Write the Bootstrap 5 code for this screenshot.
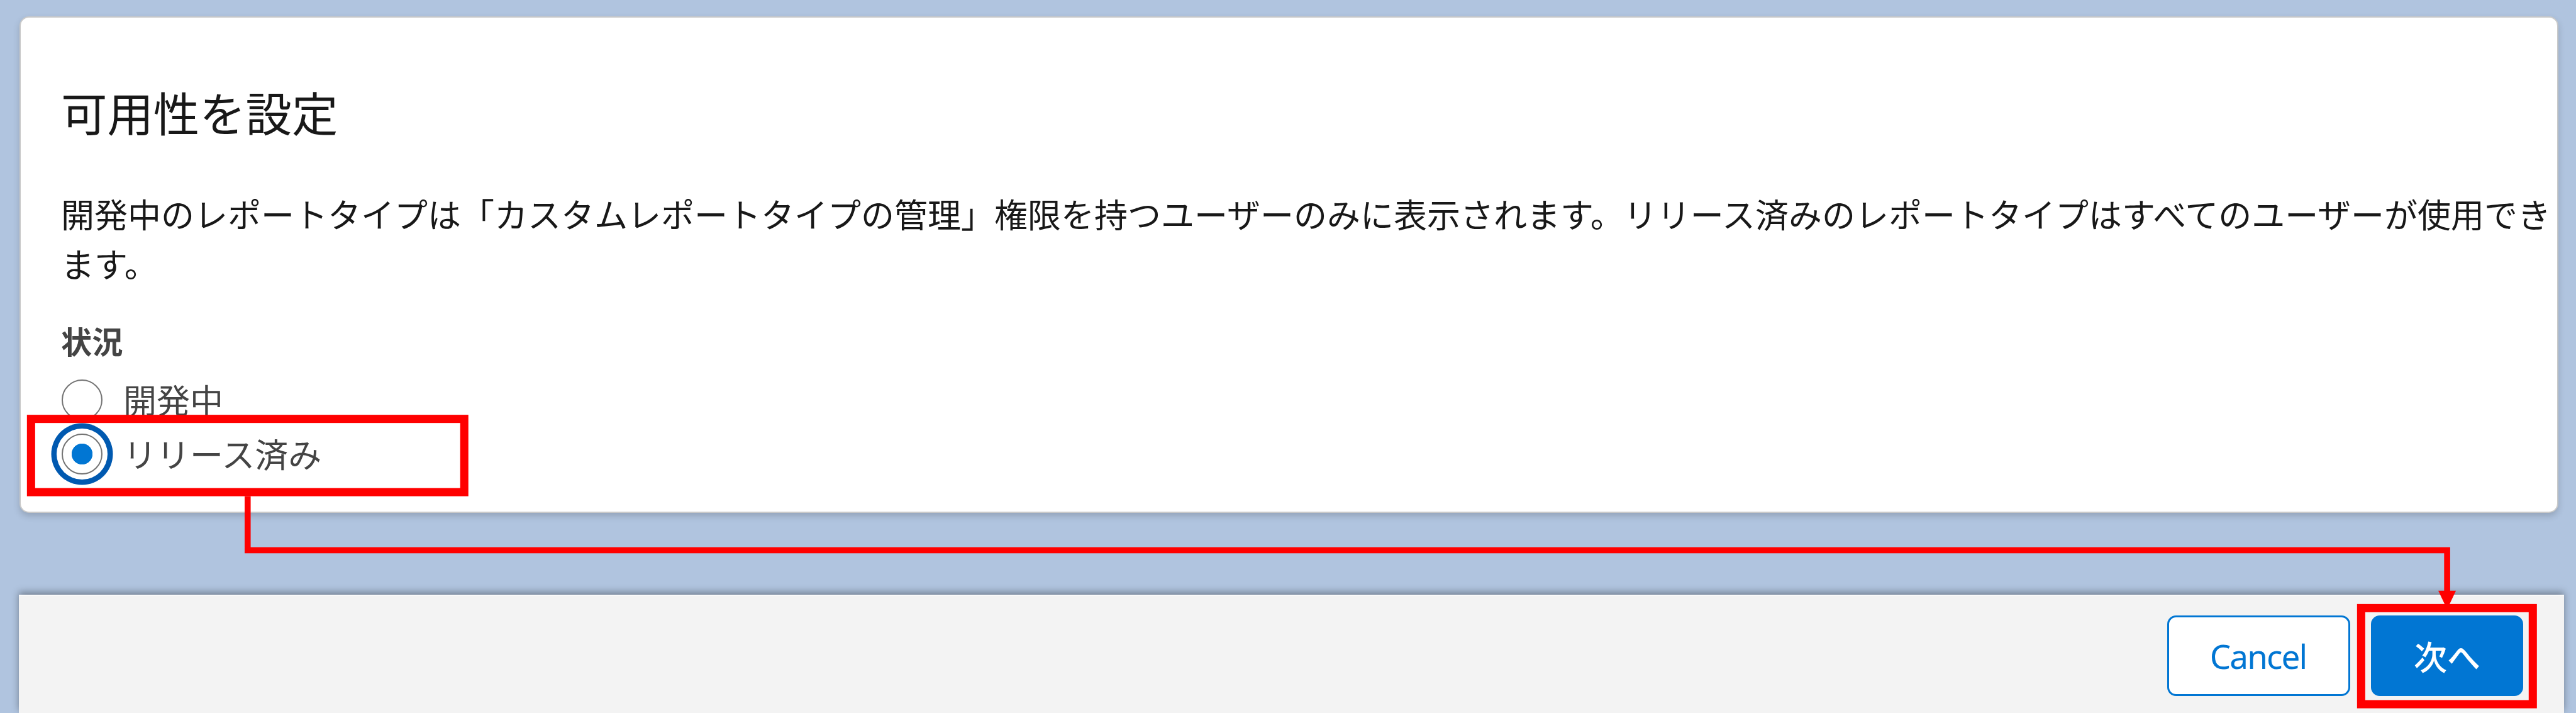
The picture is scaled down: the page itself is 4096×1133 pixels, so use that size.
<!DOCTYPE html>
<html lang="ja">
<head>
<meta charset="utf-8">
<meta name="viewport" content="width=device-width, initial-scale=1">
<title>可用性を設定</title>
<link href="https://cdn.jsdelivr.net/npm/bootstrap@5.3.0/dist/css/bootstrap.min.css" rel="stylesheet">
<style>
html,body{height:100%}
body{background:#b0c4df;font-family:"Noto Sans CJK JP",sans-serif;color:#181818;overflow:hidden}
.page-shell{width:4096px;height:1133px;padding:26px 18px 0 30px}
.setup-card{color:#181818;width:4037px;height:789px;margin-left:1px;border:2px solid #c9c9c9;border-radius:15px;box-shadow:0 5px 11px rgba(0,0,0,.17);padding:94px 0 0 64px}
.setup-title{font-size:73.4px;line-height:110px;margin:0 0 68px}
.setup-desc{font-size:53px;line-height:79.2px;margin:0 0 46px;width:3969px;word-break:break-all;line-break:anywhere}
.status-legend{font-size:49.2px;line-height:74px;font-weight:700;color:#444;margin:0 0 14px;float:none}
.status-option{height:86px;margin:0 0 0 1px;padding:0;gap:33px;color:#444}
.status-option .form-check-input{float:none;flex:none;width:65px;height:65px;margin:0;border:2px solid #747474;background-image:none;background-color:#fff;box-shadow:none}
.status-option .form-check-input:checked{background-color:#fff;border-color:#747474;background-size:100% 100%;background-image:radial-gradient(circle,#0176d3 0 16.3px,transparent 17px);box-shadow:0 0 0 8px #fff,0 0 0 16.5px #0059b0}
.status-option .form-check-label{font-size:53px;line-height:80px;padding-bottom:2px}
.footer-bar{width:4047px;height:188px;margin-top:130px;background:#f3f3f3;border-top:2px solid #fafafa;box-shadow:0 -4px 11px rgba(0,0,0,.35);padding:31px 65px 0 0;gap:33px}
.footer-bar .btn{height:128px;border-radius:14px;border-width:3px;font-size:53px;padding:0;line-height:1;display:flex;align-items:center;justify-content:center}
.footer-bar .btn-cancel{width:291px;background:#fff;border-color:#0176d3;color:#0176d3;font-family:"Noto Sans","Noto Sans CJK JP",sans-serif;letter-spacing:-1.9px;padding:1px 2px 0 0}
.footer-bar .btn-forward{width:242px;background:#0176d3;border-color:#0176d3;color:#fff;font-weight:500}
.guide-layer{pointer-events:none;width:4096px;height:1133px}
</style>
<script src="https://cdn.jsdelivr.net/npm/bootstrap@5.3.0/dist/js/bootstrap.bundle.min.js"></script>
</head>
<body>
<div class="page-shell position-relative overflow-hidden">
  <main class="card setup-card">
    <h1 class="setup-title fw-normal">可用性を設定</h1>
    <p class="setup-desc">開発中のレポートタイプは「カスタムレポートタイプの管理」権限を持つユーザーのみに表示されます。リリース済みのレポートタイプはすべてのユーザーが使用できます。</p>
    <fieldset>
      <legend class="status-legend">状況</legend>
      <div class="form-check status-option d-flex align-items-center">
        <input class="form-check-input" type="radio" name="status" id="dev">
        <label class="form-check-label" for="dev">開発中</label>
      </div>
      <div class="form-check status-option d-flex align-items-center">
        <input class="form-check-input" type="radio" name="status" id="released" checked>
        <label class="form-check-label" for="released">リリース済み</label>
      </div>
    </fieldset>
  </main>
  <footer class="footer-bar d-flex justify-content-end align-items-start">
    <button type="button" class="btn btn-cancel">Cancel</button>
    <button type="button" class="btn btn-forward">次へ</button>
  </footer>
  <svg class="guide-layer position-absolute top-0 start-0" viewBox="0 0 4400 1217" preserveAspectRatio="none" aria-hidden="true">
    <g fill="none" stroke="#f00">
      <rect x="53" y="715" width="740" height="125" stroke-width="14"/>
      <rect x="4033" y="1038" width="293.2" height="164" stroke-width="14"/>
      <path d="M423 847V939.2H4179.9V1012" stroke-width="10.3"/>
    </g>
    <path d="M4164.8 1008.3H4194.9L4179.9 1040Z" fill="#f00"/>
  </svg>
</div>
</body>
</html>
